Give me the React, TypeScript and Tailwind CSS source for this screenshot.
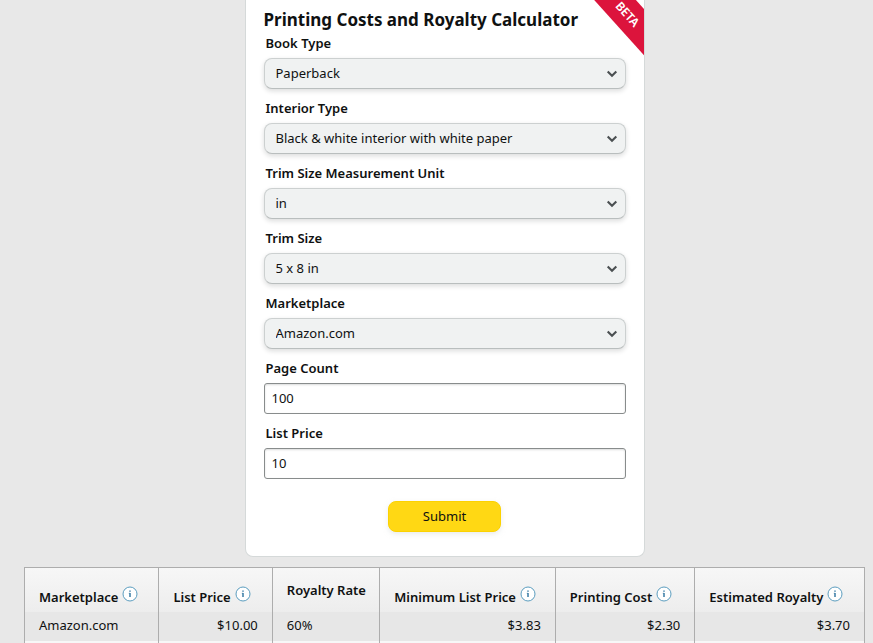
import { useState } from "react";
import type { FormEvent } from "react";

interface SelectField {
    id: string;
    label: string;
    options: string[];
}

interface TextField {
    id: string;
    label: string;
    initial: string;
}

interface Column {
    title: string;
    value: string;
    width: string;
    hasInfo: boolean;
    alignRight: boolean;
}

const selectFields: SelectField[] = [
    { id: "bookType", label: "Book Type", options: ["Paperback"] },
    { id: "interiorType", label: "Interior Type", options: ["Black & white interior with white paper"] },
    { id: "trimUnit", label: "Trim Size Measurement Unit", options: ["in"] },
    { id: "trimSize", label: "Trim Size", options: ["5 x 8 in"] },
    { id: "marketplace", label: "Marketplace", options: ["Amazon.com"] },
];

const textFields: TextField[] = [
    { id: "pageCount", label: "Page Count", initial: "100" },
    { id: "listPrice", label: "List Price", initial: "10" },
];

const columns: Column[] = [
    { title: "Marketplace", value: "Amazon.com", width: "w-[16%]", hasInfo: true, alignRight: false },
    { title: "List Price", value: "$10.00", width: "w-[13.5%]", hasInfo: true, alignRight: true },
    { title: "Royalty Rate", value: "60%", width: "w-[12.8%]", hasInfo: false, alignRight: false },
    { title: "Minimum List Price", value: "$3.83", width: "w-[20.9%]", hasInfo: true, alignRight: true },
    { title: "Printing Cost", value: "$2.30", width: "w-[16.6%]", hasInfo: true, alignRight: true },
    { title: "Estimated Royalty", value: "$3.70", width: "w-[20.2%]", hasInfo: true, alignRight: true },
];

function InfoIcon() {
    return (
        <svg className="size-4 shrink-0" viewBox="0 0 16 16" fill="none" aria-hidden="true">
            <circle cx="8" cy="8" r="7" fill="#fff" stroke="#5b9dbf" />
            <path d="M8 4.4v1.4M8 7v4" stroke="#3a7ca5" strokeWidth="1.5" />
            <path d="M6.8 7.3H8" stroke="#3a7ca5" strokeWidth=".7" />
        </svg>
    );
}

function FieldSelect({ field }: { field: SelectField }) {
    return (
        <div className="mb-[9px]">
            <label htmlFor={field.id} className="block h-[25px] pl-0.5 leading-5 font-semibold">
                {field.label}
            </label>
            <div className="relative">
                <select
                    id={field.id}
                    className="block h-[31px] w-full appearance-none rounded-lg border border-[#ccd0d0] border-b-[#b9bebe] bg-[#f0f2f2] pr-8 pl-[11px] shadow-[0_2px_5px_rgba(15,17,17,0.15)] outline-none"
                >
                    {field.options.map((option) => (
                        <option key={option}>{option}</option>
                    ))}
                </select>
                <svg
                    className="pointer-events-none absolute top-3 right-2 h-2 w-3"
                    viewBox="0 0 12 8"
                    fill="none"
                    aria-hidden="true"
                >
                    <path d="M1.7 1.4 6 5.7l4.3-4.3" stroke="#4b5052" strokeWidth="2.1" />
                </svg>
            </div>
        </div>
    );
}

export default function App() {
    const [values, setValues] = useState<Record<string, string>>({
        pageCount: textFields[0].initial,
        listPrice: textFields[1].initial,
    });

    const handleSubmit = (event: FormEvent) => {
        event.preventDefault();
    };

    return (
        <main className="min-h-screen bg-[#e8e8e8] pr-2 pl-6 font-['Noto_Sans',sans-serif] text-[13px] text-[#0f1111]">
            <form
                onSubmit={handleSubmit}
                className="relative mx-auto max-w-[400px] overflow-hidden rounded-b-lg border border-t-0 border-[#d5d9d9] bg-white px-[18px] pt-[7px] pb-6"
            >
                <h1 className="text-[17px] leading-[26px] font-bold whitespace-nowrap">
                    Printing Costs and Royalty Calculator
                </h1>
                <span className="absolute top-0 -right-[45px] flex h-[31px] w-[120px] rotate-[48deg] items-center justify-center bg-[#dc143c] pr-1 text-[12px] leading-4 font-semibold text-white">
                    BETA
                </span>

                {selectFields.map((field) => (
                    <FieldSelect key={field.id} field={field} />
                ))}

                {textFields.map((field) => (
                    <div key={field.id} className="mb-[9px]">
                        <label htmlFor={field.id} className="block h-[25px] pl-0.5 leading-5 font-semibold">
                            {field.label}
                        </label>
                        <input
                            id={field.id}
                            type="text"
                            value={values[field.id]}
                            onChange={(e) => setValues({ ...values, [field.id]: e.target.value })}
                            className="block h-[31px] w-full rounded-[3px] border border-[#888c8c] bg-white px-[7px] pb-0.5 shadow-[inset_0_1px_2px_rgba(15,17,17,0.15)] outline-none"
                        />
                    </div>
                ))}

                <button
                    type="submit"
                    className="mx-auto mt-[22px] block h-[31px] w-[113px] rounded-lg border border-[#fcd200] bg-[#ffd814] shadow-[0_2px_5px_rgba(213,217,217,0.5)]"
                >
                    Submit
                </button>
            </form>

            {/* results */}
            <table className="mt-2.5 w-full table-fixed border-collapse border border-[#adadad]">
                <thead>
                    <tr className="h-11 bg-linear-to-b from-[#f7f7f7] to-[#ededed]">
                        {columns.map((column) => (
                            <th
                                key={column.title}
                                scope="col"
                                className={`${column.width} border-x border-[#adadad] pt-3 pl-3.5 text-left align-top font-semibold whitespace-nowrap`}
                            >
                                {column.hasInfo ? (
                                    <span className="flex gap-1 pt-1.5">
                                        <span className="pt-px leading-5">{column.title}</span>
                                        <InfoIcon />
                                    </span>
                                ) : (
                                    <span className="block leading-5">{column.title}</span>
                                )}
                            </th>
                        ))}
                    </tr>
                </thead>
                <tbody>
                    <tr className="h-[29px] bg-[#e7e7e7]">
                        {columns.map((column) => (
                            <td
                                key={column.title}
                                className={`border-x border-[#adadad] px-3.5 ${column.alignRight ? "text-right" : "text-left"}`}
                            >
                                {column.value}
                            </td>
                        ))}
                    </tr>
                    <tr className="h-2 bg-[#f7f7f7]">
                        {columns.map((column) => (
                            <td key={column.title} className="border-x border-[#adadad]" />
                        ))}
                    </tr>
                </tbody>
            </table>
        </main>
    );
}
